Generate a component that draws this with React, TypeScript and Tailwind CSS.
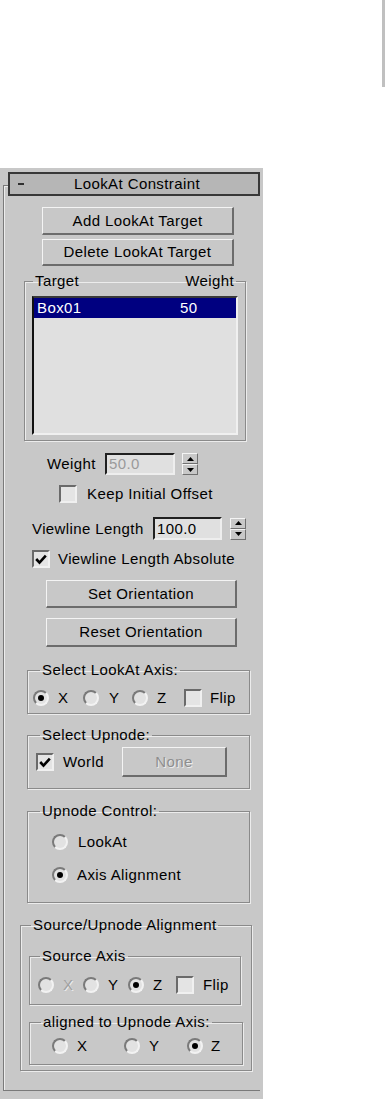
import React from "react";

const font = "font-['Liberation_Sans',Arial,sans-serif]";

const Button = ({
  label,
  className = "",
  disabled = false,
}: {
  label: string;
  className?: string;
  disabled?: boolean;
}) => (
  <div
    className={`flex items-center justify-center border-t border-l border-b-2 border-r-2 border-t-[#f4f4f4] border-l-[#f4f4f4] border-b-[#6c6c6c] border-r-[#6c6c6c] bg-[#c8c8c8] ${
      disabled ? "text-[#8e8e8e] [text-shadow:1px_1px_0_#ececec]" : "text-black"
    } ${className}`}
  >
    {label}
  </div>
);

const Radio = ({ checked = false }: { checked?: boolean }) => (
  <span className="flex h-[16px] w-[16px] shrink-0 items-center justify-center rounded-full border-2 border-t-[#7a7a7a] border-l-[#7a7a7a] border-b-[#f2f2f2] border-r-[#f2f2f2] bg-[#e2e2e2]">
    {checked && <span className="h-[6px] w-[6px] rounded-full bg-black" />}
  </span>
);

const Check = ({ checked = false }: { checked?: boolean }) => (
  <span className="flex h-[18px] w-[18px] shrink-0 items-center justify-center border-2 border-t-[#6a6a6a] border-l-[#6a6a6a] border-b-[#f0f0f0] border-r-[#f0f0f0] bg-[#e4e4e4]">
    {checked && (
      <svg width="12" height="11" viewBox="0 0 12 11">
        <path d="M1.2 5 L4.5 8.6 L10.8 1.6" stroke="#000" strokeWidth="2.6" fill="none" />
      </svg>
    )}
  </span>
);

const Spinner = ({ className = "" }: { className?: string }) => (
  <div className={`flex h-[22px] w-[16px] flex-col ${className}`}>
    <div className="flex flex-1 items-center justify-center border border-t-[#f4f4f4] border-l-[#f4f4f4] border-b-[#707070] border-r-[#707070] bg-[#c8c8c8]">
      <svg width="7" height="4" viewBox="0 0 7 4">
        <path d="M3.5 0 L7 4 L0 4Z" fill="#000" />
      </svg>
    </div>
    <div className="flex flex-1 items-center justify-center border border-t-[#f4f4f4] border-l-[#f4f4f4] border-b-[#707070] border-r-[#707070] bg-[#c8c8c8]">
      <svg width="7" height="4" viewBox="0 0 7 4">
        <path d="M0 0 L7 0 L3.5 4Z" fill="#000" />
      </svg>
    </div>
  </div>
);

const Input = ({ value, className = "", disabled = false }: { value: string; className?: string; disabled?: boolean }) => (
  <div
    className={`flex items-center border-2 border-t-[#202020] border-l-[#202020] border-b-[#eeeeee] border-r-[#eeeeee] bg-[#e0e0e0] pl-[2px] ${
      disabled ? "text-[#9a9a9a]" : "text-black"
    } ${className}`}
  >
    {value}
  </div>
);

const Group = ({
  legend,
  className = "",
  legendClass = "ml-[12px]",
  children,
}: {
  legend: React.ReactNode;
  className?: string;
  legendClass?: string;
  children: React.ReactNode;
}) => (
  <fieldset
    className={`m-0 border border-[#8a8a8a] p-0 shadow-[1px_1px_0_#ececec,inset_1px_1px_0_#ececec] ${className}`}
  >
    <legend className={`px-[2px] leading-[18px] ${legendClass}`}>{legend}</legend>
    {children}
  </fieldset>
);

const Pair = ({
  label,
  checked = false,
  w,
  gap = "ml-[9px]",
  dim = false,
}: {
  label: string;
  checked?: boolean;
  w: string;
  gap?: string;
  dim?: boolean;
}) => (
  <div className={`flex items-center ${w}`}>
    <Radio checked={checked} />
    <span className={`${gap} ${dim ? "text-[#a0a0a0] [text-shadow:1px_1px_0_#ececec]" : ""}`}>{label}</span>
  </div>
);

export default function App() {
  return (
    <div className={`h-[1099px] w-[385px] overflow-hidden bg-white text-[15px] leading-[18px] tracking-[0.4px] text-black ${font}`}>
      <div className="flex h-[168px] justify-end">
        <div className="h-[87px] w-[3px] bg-[#c0c0c0]" />
      </div>

      <div className="h-[931px] w-[263px] bg-[#c8c8c8] pt-[17px]">
        <div className="ml-[3px] w-[257px] border-t border-l border-b border-[#7a7a7a] pb-[19px] shadow-[inset_1px_1px_0_#ececec]">
          {/* rollout title */}
          <div className="relative -mt-[14px] ml-[4px] flex h-[24px] w-[252px] items-center border-2 border-[#383838] bg-[#b6b6b6]">
            <span className="ml-[8px] h-[2px] w-[6px] bg-[#303030]" />
            <span className="flex-1 pr-[8px] text-center">LookAt Constraint</span>
          </div>

          <Button label="Add LookAt Target" className="mt-[11px] ml-[38px] h-[28px] w-[192px]" />
          <Button label="Delete LookAt Target" className="mt-[4px] ml-[38px] h-[27px] w-[192px]" />

          <Group
            className="mt-[6px] ml-[20px] w-[222px] pb-[5px]"
            legendClass="ml-[8px]"
            legend={
              <span className="flex w-[199px] justify-between">
                <span>Target</span>
                <span>Weight</span>
              </span>
            }
          >
            <div className="ml-[7px] mt-[6px] h-[139px] w-[206px] border-2 border-t-[#3a3a3a] border-l-[#111111] border-b-[#f0f0f0] border-r-[#f0f0f0] bg-[#e0e0e0]">
              <div className="flex h-[20px] items-center bg-[#000080] text-white">
                <span className="ml-[3px] w-[143px]">Box01</span>
                <span>50</span>
              </div>
            </div>
          </Group>

          <div className="mt-[12px] ml-[43px] flex items-center">
            <span className="w-[58px]">Weight</span>
            <Input value="50.0" disabled className="h-[22px] w-[70px]" />
            <Spinner className="ml-[7px]" />
          </div>

          <div className="mt-[10px] ml-[55px] flex items-center">
            <Check />
            <span className="ml-[10px]">Keep Initial Offset</span>
          </div>

          <div className="mt-[14px] ml-[28px] flex items-center">
            <span className="w-[121px]">Viewline Length</span>
            <Input value="100.0" className="h-[23px] w-[69px]" />
            <Spinner className="ml-[8px]" />
          </div>

          <div className="mt-[10px] ml-[28px] flex items-center">
            <Check checked />
            <span className="ml-[8px]">Viewline Length Absolute</span>
          </div>

          <Button label="Set Orientation" className="mt-[12px] ml-[42px] h-[28px] w-[191px]" />
          <Button label="Reset Orientation" className="mt-[10px] ml-[42px] h-[29px] w-[191px]" />

          <Group legend="Select LookAt Axis:" className="mt-[14px] ml-[23px] w-[223px] pb-[6px]">
            <div className="mt-[10px] ml-[5px] flex h-[18px] items-center">
              <Pair label="X" checked w="w-[50px]" />
              <Pair label="Y" w="w-[49px]" gap="ml-[10px]" />
              <Pair label="Z" w="w-[52px]" />
              <Check />
              <span className="ml-[8px]">Flip</span>
            </div>
          </Group>

          <Group legend="Select Upnode:" className="mt-[12px] ml-[23px] w-[223px] pb-[11px]">
            <div className="mt-[3px] ml-[8px] flex items-center">
              <Check checked />
              <span className="ml-[9px] w-[59px]">World</span>
              <Button label="None" disabled className="h-[30px] w-[105px]" />
            </div>
          </Group>

          <Group legend="Upnode Control:" className="mt-[13px] ml-[23px] w-[223px] pb-[18px]">
            <div className="mt-[13px] ml-[24px] flex h-[18px] items-center">
              <Radio />
              <span className="ml-[10px]">LookAt</span>
            </div>
            <div className="mt-[15px] ml-[24px] flex h-[18px] items-center">
              <Radio checked />
              <span className="ml-[9px]">Axis Alignment</span>
            </div>
          </Group>

          <Group
            legend="Source/Upnode Alignment"
            legendClass="ml-[10px]"
            className="mt-[13px] ml-[16px] w-[232px] pb-[5px]"
          >
            <Group legend="Source Axis" legendClass="ml-[10px]" className="mt-[13px] ml-[8px] w-[212px] pb-[10px]">
              <div className="mt-[11px] ml-[8px] flex h-[18px] items-center">
                <Pair label="X" dim w="w-[45px]" />
                <Pair label="Y" w="w-[45px]" />
                <Pair label="Z" checked w="w-[48px]" />
                <Check />
                <span className="ml-[9px]">Flip</span>
              </div>
            </Group>
            <Group
              legend="aligned to Upnode Axis:"
              legendClass="ml-[11px]"
              className="mt-[8px] ml-[8px] w-[214px] pb-[9px]"
            >
              <div className="mt-[6px] ml-[22px] flex h-[18px] items-center">
                <Pair label="X" w="w-[72px]" />
                <Pair label="Y" w="w-[63px]" />
                <Pair label="Z" checked w="w-[40px]" gap="ml-[8px]" />
              </div>
            </Group>
          </Group>
        </div>
      </div>
    </div>
  );
}
